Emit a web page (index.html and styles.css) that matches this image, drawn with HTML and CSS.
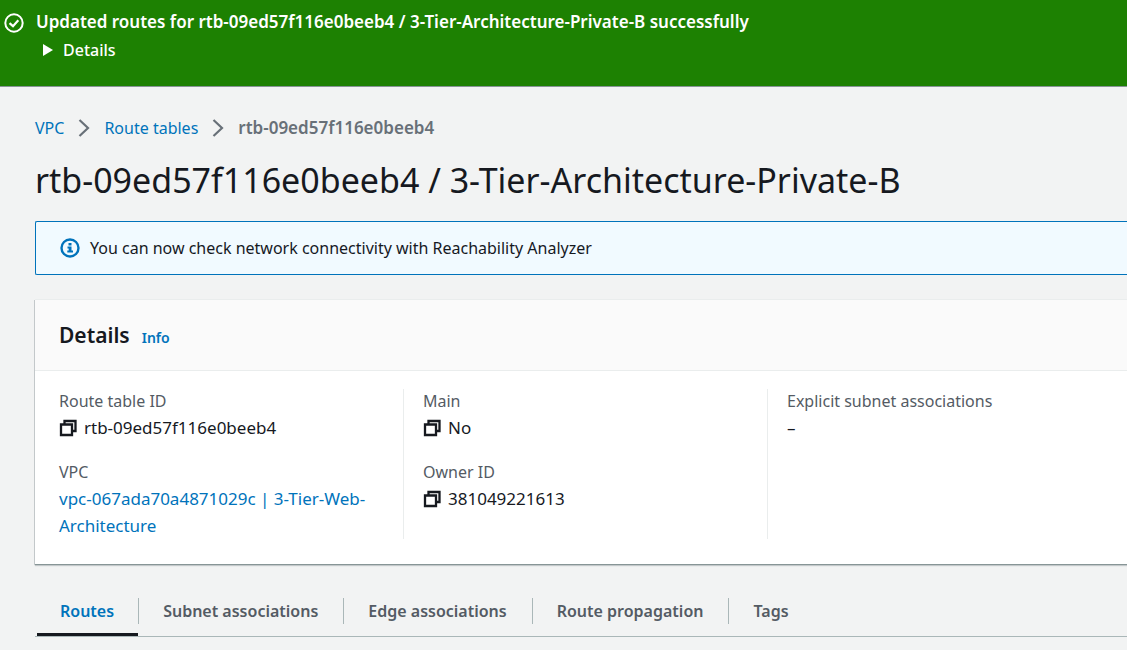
FILE: index.html
```html
<!DOCTYPE html>
<html lang="en">
<head>
<meta charset="utf-8">
<title>Route table details</title>
<link rel="stylesheet" href="styles.css">
</head>
<body>
<svg class="sprite" aria-hidden="true">
  <symbol id="copy" viewBox="0 0 18 18"><path d="M5.500 5V2H16.500v10h-3M2 5.500h11V16H2z" fill="none" stroke="#16191f" stroke-width="2.300"/></symbol>
  <symbol id="chevron" viewBox="0 0 12 20"><path d="M1.500 2 10 10 1.500 18" fill="none" stroke="#687078" stroke-width="2.200"/></symbol>
</svg>
<section class="flash" role="status">
  <svg class="flash-icon" viewBox="0 0 20 20" fill="none" stroke="#fff"><circle cx="10" cy="10" r="8.700" stroke-width="2"/><path d="M5.500 10.200 9 13.200 14.300 7.300" stroke-width="2.200"/></svg>
  <div class="flash-content">
    <strong class="flash-title">Updated routes for rtb-09ed57f116e0beeb4 / 3-Tier-Architecture-Private-B successfully</strong>
    <button class="flash-toggle" type="button"><svg class="caret" viewBox="0 0 10 12"><path d="M0 0 10 6 0 12z" fill="#fff"/></svg>Details</button>
  </div>
</section>
<main class="page">
  <nav class="breadcrumbs" aria-label="Breadcrumbs">
    <a href="#">VPC</a>
    <svg class="chevron"><use href="#chevron"/></svg>
    <a href="#">Route tables</a>
    <svg class="chevron"><use href="#chevron"/></svg>
    <span class="current">rtb-09ed57f116e0beeb4</span>
  </nav>
  <h1 class="title">rtb-09ed57f116e0beeb4 / 3-Tier-Architecture-Private-B</h1>
  <div class="notice">
    <svg class="notice-icon" viewBox="0 0 20 20"><circle cx="10" cy="10" r="8.500" fill="none" stroke="#0073bb" stroke-width="2.400"/><path d="M8.500 5h3v2.500h-3zM7.500 8.500h4v4H13V14.500H7.300V12.500H8.700V10.400H7.500z" fill="#0073bb"/></svg>
    <span>You can now check network connectivity with Reachability Analyzer</span>
  </div>
  <section class="card">
    <header class="card-header">
      <h2 class="card-title">Details</h2>
      <a class="info" href="#">Info</a>
    </header>
    <div class="columns">
      <dl class="column">
        <div><dt>Route table ID</dt><dd class="copyable"><button class="copy" type="button" aria-label="Copy route table ID"><svg><use href="#copy"/></svg></button>rtb-09ed57f116e0beeb4</dd></div>
        <div><dt>VPC</dt><dd><a href="#">vpc-067ada70a4871029c | 3-Tier-Web-Architecture</a></dd></div>
      </dl>
      <dl class="column">
        <div><dt>Main</dt><dd class="copyable"><button class="copy" type="button" aria-label="Copy main"><svg><use href="#copy"/></svg></button>No</dd></div>
        <div><dt>Owner ID</dt><dd class="copyable"><button class="copy" type="button" aria-label="Copy owner ID"><svg><use href="#copy"/></svg></button>381049221613</dd></div>
      </dl>
      <dl class="column">
        <div><dt>Explicit subnet associations</dt><dd>–</dd></div>
      </dl>
    </div>
  </section>
  <div class="tabs" role="tablist">
    <button class="tab active" type="button" role="tab" aria-selected="true"><span>Routes</span></button>
    <button class="tab" type="button" role="tab" aria-selected="false"><span>Subnet associations</span></button>
    <button class="tab" type="button" role="tab" aria-selected="false"><span>Edge associations</span></button>
    <button class="tab" type="button" role="tab" aria-selected="false"><span>Route propagation</span></button>
    <button class="tab" type="button" role="tab" aria-selected="false"><span>Tags</span></button>
  </div>
</main>
</body>
</html>
```
FILE: styles.css
```css
* { box-sizing: border-box; }
body {
  margin: 0;
  background: #f2f3f3;
  color: #16191f;
  font: 16px/26px "Noto Sans", sans-serif;
}
a { color: #0073bb; text-decoration: none; }
button { font: inherit; border: 0; padding: 0; background: none; cursor: pointer; }
h1, h2, dl, dd { margin: 0; }
.sprite { display: none; }

.flash {
  display: flex;
  gap: 12px;
  padding: 8px 4px 23px;
  background: #1d8102;
  border-bottom: 1px solid #879596;
  color: #fff;
}
.flash-icon { flex: none; width: 20px; height: 20px; margin-top: 5px; }
.flash-content { display: flex; flex-direction: column; align-items: flex-start; gap: 1px; }
.flash-title { font-size: 17px; line-height: 28px; font-weight: 600; }
.flash-toggle { display: flex; align-items: center; gap: 10px; margin-left: 7px; color: #fff; font-weight: 500; line-height: 26px; }
.caret { width: 10px; height: 12px; }

.page { padding-left: 35px; overflow: hidden; }
.breadcrumbs { display: flex; align-items: center; gap: 14px; padding-top: 28px; }
.chevron { width: 12px; height: 20px; }
.current { color: #687078; font-size: 17px; font-weight: 600; }
.title { padding: 15px 0 17px; font-size: 34px; line-height: 48px; font-weight: 400; white-space: nowrap; }

.notice {
  display: flex;
  align-items: center;
  gap: 10px;
  padding: 13px 24px;
  border: 1px solid #0073bb;
  border-right: 0;
  border-radius: 2px 0 0 2px;
  background: #f1faff;
}
.notice-icon { flex: none; width: 20px; height: 20px; }

.card {
  margin-top: 25px;
  background: #fff;
  border-bottom: 1px solid #879596;
  box-shadow: -1px 0 0 #c3c8ca, 0 1px 1px #c3c8ca, 0 -1px 0 #eaeded;
}
.card-header {
  display: flex;
  align-items: baseline;
  gap: 12px;
  padding: 18px 24px;
  background: #fafafa;
  border-bottom: 1px solid #eaeded;
}
.card-title { font-size: 21px; line-height: 34px; font-weight: 600; }
.info { font-size: 14px; font-weight: 600; }
.columns { display: grid; grid-template-columns: 344fr 364fr 360fr; padding: 18px 0 25px 24px; }
.column { display: flex; flex-direction: column; gap: 19px; padding-right: 24px; }
.column + .column { padding-left: 19px; border-left: 1px solid #eaeded; }
dt { color: #545b64; line-height: 25px; }
dd { font-size: 17px; line-height: 27px; }
.copyable { display: flex; align-items: center; gap: 7px; }
.copy { flex: none; width: 18px; height: 18px; }
.copy svg { display: block; width: 18px; height: 18px; }

.tabs { display: flex; margin-top: 21px; padding-left: 2px; border-bottom: 1px solid #aab7b8; }
.tab { padding: 12px 0 9px; color: #545b64; font-weight: 600; white-space: nowrap; border-bottom: 3px solid transparent; }
.tab span { display: block; padding: 0 25px 0 24px; }
.tab + .tab span { border-left: 1px solid #aab7b8; }
.tab.active { color: #0073bb; border-bottom-color: #16191f; }
.tab.active span { padding: 0 24px 0 23px; }
```
